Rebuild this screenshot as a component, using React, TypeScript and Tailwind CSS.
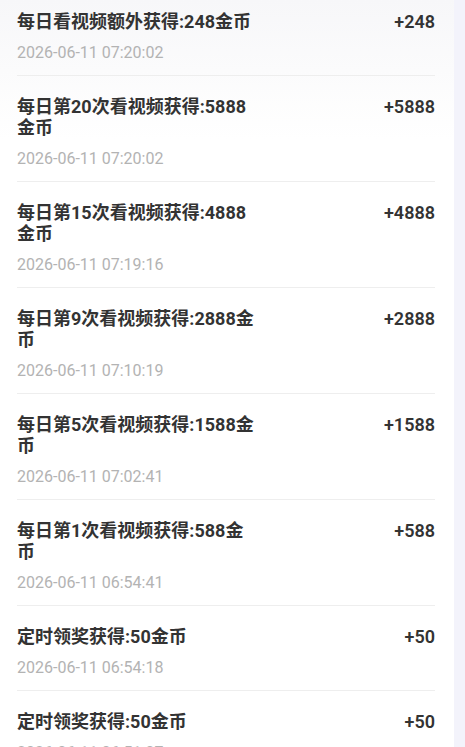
import React from 'react';

type Record = {
  title: string;
  time: string;
  amount: number;
};

const records: Record[] = [
  { title: '每日看视频额外获得:248金币', time: '2026-06-11 07:20:02', amount: 248 },
  { title: '每日第20次看视频获得:5888金币', time: '2026-06-11 07:20:02', amount: 5888 },
  { title: '每日第15次看视频获得:4888金币', time: '2026-06-11 07:19:16', amount: 4888 },
  { title: '每日第9次看视频获得:2888金币', time: '2026-06-11 07:10:19', amount: 2888 },
  { title: '每日第5次看视频获得:1588金币', time: '2026-06-11 07:02:41', amount: 1588 },
  { title: '每日第1次看视频获得:588金币', time: '2026-06-11 06:54:41', amount: 588 },
  { title: '定时领奖获得:50金币', time: '2026-06-11 06:54:18', amount: 50 },
  { title: '定时领奖获得:50金币', time: '2026-06-11 06:51:07', amount: 50 },
];

export default function App() {
  return (
    <div
      className="flex h-[747px] w-[465px] overflow-hidden bg-[#f3f3fb]"
      style={{ fontFamily: 'Roboto, "Noto Sans CJK SC", sans-serif' }}
    >
      <div className="w-[454px] shrink-0 bg-[linear-gradient(to_bottom,#f7f7f9_0px,#ffffff_140px)]">
        <ul className="-mt-[9px] px-[17px] pr-[19px]">
          {records.map((r, i) => (
            <li key={i} className="flex items-start justify-between border-b border-[#eeeeee] pt-[20px] pb-[12px]">
              <div>
                <p className="w-[242px] text-[18px] leading-[21px] font-bold text-[#333333]">{r.title}</p>
                <p className="mt-[11px] text-[16px] leading-[20px] text-[#b3b3b3]">{r.time}</p>
              </div>
              <span className="text-[18px] leading-[21px] font-semibold text-[#333333]">+{r.amount}</span>
            </li>
          ))}
        </ul>
      </div>
    </div>
  );
}
